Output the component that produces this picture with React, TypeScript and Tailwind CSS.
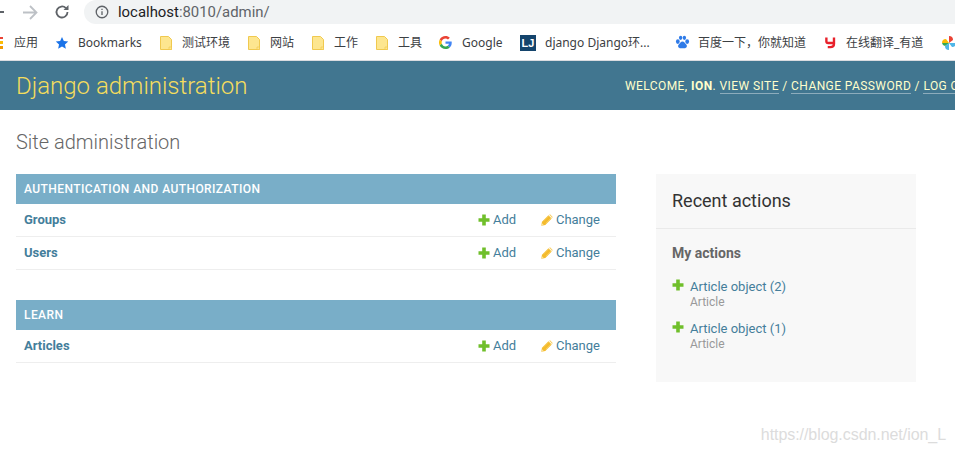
import React from "react";

const Plus = ({ className = "" }: { className?: string }) => (
  <svg viewBox="0 0 12 12" className={`w-[12px] h-[12px] shrink-0 ${className}`}>
    <path d="M4.2 0.5h3.600v3.700h3.700v3.600h-3.700v3.700h-3.600v-3.700h-3.700v-3.600h3.700z" fill="#70bf2b" />
  </svg>
);
const Pencil = () => (
  <svg viewBox="0 0 12 12" className="w-[12px] h-[12px] shrink-0">
    <path d="M0.3 11.700l0.700-4 6.400-6.400 3.300 3.300-6.400 6.400z" fill="#f4bb2c" />
    <path d="M8.200 0.800l0.900-0.500 2.600 2.600-0.500 1z" fill="#f8cf66" />
    <path d="M2.600 6.800l5.600-5.400M4.900 9.200l5.500-5.500" stroke="#fbdc8c" strokeWidth="0.5" fill="none" />
    <path d="M0.300 11.700l0.500-2.600 2.100 2.100z" fill="#fbe3a0" />
  </svg>
);
const Folder = () => (
  <svg viewBox="0 0 12 14" className="w-[12px] h-[14px] shrink-0">
    <path d="M0.5 0.5h8l3 3v10h-11z" fill="#fde68f" stroke="#f0c94f" />
    <path d="M9 11h2.500v2.500H9z" fill="#fde68f" stroke="#f0c94f" strokeWidth="0.7" />
  </svg>
);

const Bookmark = ({ icon, label, className = "" }: { icon: React.ReactNode; label: string; className?: string }) => (
  <div className={`flex items-center shrink-0 ${className}`}>
    {icon}
    <span className="whitespace-nowrap">{label}</span>
  </div>
);

const Row = ({ name }: { name: string }) => (
  <div className="h-[33px] flex items-center border-b border-[#eeeeee] pl-2 pr-[16px] text-[13px]">
    <a className="font-bold text-[#447e9b] flex-1">{name}</a>
    <Plus />
    <a className="text-[#447e9b] ml-[3px] w-[48px]">Add</a>
    <span className="w-[13px] flex"><Pencil /></span>
    <a className="text-[#447e9b] ml-[2px]">Change</a>
  </div>
);

const Caption = ({ children }: { children: string }) => (
  <div className="h-[30px] bg-[#79aec8] text-white text-[12px] font-medium tracking-[0.42px] flex items-center px-2">{children}</div>
);

const Action = ({ label }: { label: string }) => (
  <div className="flex h-[42px]">
    <Plus className="mt-[1px] mr-[6px]" />
    <div>
      <div className="text-[13px] leading-[17px] text-[#447e9b]">{label}</div>
      <div className="text-[12px] leading-[14px] text-[#999999]">Article</div>
    </div>
  </div>
);

export default function App() {
  return (
    <div className="w-[955px] h-[453px] overflow-hidden relative bg-white font-['Roboto',sans-serif]">
      <div className="h-6 flex items-center relative">
        <div className="w-[22px] h-[2px] -ml-[18px] bg-[#5f6368]" />
        <svg viewBox="0 0 16 16" className="w-[16px] h-[16px] ml-[18px]" fill="none" stroke="#bdc1c6" strokeWidth="1.8">
          <path d="M1 8.500h13M8 2l6.500 6.500L8 15" />
        </svg>
        <svg viewBox="0 0 16 16" className="w-[16px] h-[16px] ml-[16px]" fill="none" stroke="#5f6368" strokeWidth="1.8">
          <path d="M13.500 8a5.500 5.500 0 1 1-1.600-3.900" />
          <path d="M14.500 1v5h-5z" fill="#5f6368" stroke="none" />
        </svg>
        <div className="ml-[14px] flex-1 h-6 bg-[#f1f3f4] rounded-l-[12px] flex items-center pl-[11px] -mr-1">
          <svg viewBox="0 0 16 16" className="w-[14px] h-[14px]" fill="none" stroke="#5f6368" strokeWidth="1.5">
            <circle cx="8" cy="8" r="6.600" />
            <path d="M8 7v4.500M8 4.300v1.500" />
          </svg>
          <span className="ml-[9px] text-[14.9px]">
            <span className="text-[#202124]">localhost</span><span className="text-[#5f6368]">:8010/admin/</span>
          </span>
        </div>
      </div>
      <div className="h-[37px] pt-px border-b border-[#dadce0] flex items-center text-[12px] text-[#3c4043] font-['Noto_Sans','Noto_Sans_CJK_SC',sans-serif] relative">
        <div className="w-[3px] h-[12px] shrink-0 flex flex-col gap-[2px] mr-[11px]">
          <i className="h-[3px] bg-[#ea4335]" /><i className="h-[3px] bg-[#fbbc05]" /><i className="h-[3px] bg-[#f29900]" />
        </div>
        <Bookmark label="应用" icon={null} className="w-[41px]" />
        <Bookmark label="Bookmarks" className="w-[105px]" icon={
          <svg viewBox="0 0 16 16" className="w-[14px] h-[14px] mr-[9px]"><path d="M8 1l2.100 4.600 5 .6-3.700 3.400 1 5L8 11.900 3.600 14.600l1-5L.9 6.200l5-.6z" fill="#1a73e8" /></svg>
        } />
        <Bookmark label="测试环境" className="w-[88px]" icon={<span className="mr-[10px] flex"><Folder /></span>} />
        <Bookmark label="网站" className="w-[64px]" icon={<span className="mr-[10px] flex"><Folder /></span>} />
        <Bookmark label="工作" className="w-[64px]" icon={<span className="mr-[10px] flex"><Folder /></span>} />
        <Bookmark label="工具" className="w-[63px]" icon={<span className="mr-[10px] flex"><Folder /></span>} />
        <Bookmark label="Google" className="w-[81px]" icon={
          <svg viewBox="0 0 48 48" className="w-[13px] h-[13px] mr-[10px]">
            <path fill="#EA4335" d="M24 9.500c3.500 0 6.600 1.200 9.100 3.600l6.800-6.800C35.800 2.400 30.400 0 24 0 14.600 0 6.500 5.400 2.600 13.200l7.900 6.100C12.400 13.700 17.700 9.500 24 9.500z" />
            <path fill="#4285F4" d="M47 24.500c0-1.600-.1-3.100-.4-4.500H24v9h12.900c-.6 3-2.200 5.500-4.700 7.200l7.600 5.900C44.300 37.900 47 31.800 47 24.500z" />
            <path fill="#FBBC05" d="M10.500 28.700A14.500 14.500 0 0 1 10.500 19.300l-7.900-6.100a24 24 0 0 0 0 21.600z" />
            <path fill="#34A853" d="M24 48c6.500 0 11.900-2.100 15.800-5.800l-7.600-5.900c-2.100 1.400-4.900 2.300-8.200 2.300-6.300 0-11.600-4.200-13.500-9.900l-7.900 6.100C6.500 42.600 14.600 48 24 48z" />
          </svg>
        } />
        <Bookmark label="django Django环..." className="w-[155px]" icon={
          <span className="w-[16px] h-[16px] bg-[#14446c] text-white text-[11px] font-bold leading-[16px] text-center mr-[9px] font-['Liberation_Sans']">LJ</span>
        } />
        <Bookmark label="百度一下，你就知道" className="w-[150px]" icon={
          <svg viewBox="0 0 16 16" className="w-[15px] h-[15px] mr-[8px]" fill="#2f7be8">
            <ellipse cx="3" cy="7" rx="2" ry="2.500" /><ellipse cx="6" cy="3" rx="1.800" ry="2.300" /><ellipse cx="10" cy="3" rx="1.800" ry="2.300" /><ellipse cx="13" cy="7" rx="2" ry="2.500" />
            <path d="M8 7c2 0 2.500 2 4 3 1.500 1.500.5 4-2 4H6c-2.500 0-3.500-2.500-2-4 1.500-1 2-3 4-3z" />
          </svg>
        } />
        <Bookmark label="在线翻译_有道" className="w-[116px]" icon={
          <svg viewBox="0 0 12 14" className="w-[11px] h-[13px] mr-[10px]" fill="none" stroke="#e8212b" strokeWidth="2.600"><path d="M1.500 1.500v4.500q0 1.500 2 1.500h6M9.800 1.500v7q0 3.500-4 3.500H3" /></svg>
        } />
        <svg viewBox="0 0 16 16" className="w-[16px] h-[16px] shrink-0">
          <path d="M8 8V1a4 4 0 0 1 4 4z" fill="#ea4335" /><path d="M8 8h7a4 4 0 0 1-4 4z" fill="#4fb6e8" />
          <path d="M8 8v7a4 4 0 0 1-4-4z" fill="#4fb6e8" /><path d="M8 8H1a4 4 0 0 1 4-4z" fill="#fbbc05" /><path d="M8 8L1 8a4 4 0 0 0 3 3z" fill="#34a853" />
        </svg>
      </div>
      <header className="h-[49px] bg-[#417690] flex items-center justify-between whitespace-nowrap pl-4">
        <div className="text-[24px] font-light text-[#f5dd5d]">Django administration</div>
        <div className="text-[12px] font-normal text-[#ffffcc] tracking-[0.42px] w-[330px] shrink-0 overflow-hidden pt-[1px]">
          WELCOME, <strong className="font-bold">ION</strong>.{" "}
          <a className="border-b border-[#ffffff66]">VIEW SITE</a> /{" "}
          <a className="border-b border-[#ffffff66]">CHANGE PASSWORD</a> /{" "}
          <a className="border-b border-[#ffffff66]">LOG OUT</a>
        </div>
      </header>
      <main className="px-4 pt-5">
        <h1 className="text-[20px] font-light text-[#666666] leading-6 mb-5">Site administration</h1>
        <div className="flex items-start">
          <div className="w-[600px] mr-10">
            <Caption>AUTHENTICATION AND AUTHORIZATION</Caption>
            <Row name="Groups" />
            <Row name="Users" />
            <div className="h-[30px]" />
            <Caption>LEARN</Caption>
            <Row name="Articles" />
          </div>
          <aside className="w-[260px] h-[208px] bg-[#f8f8f8]">
            <div className="h-[55px] border-b border-[#eaeaea] pl-4 pt-[15px] text-[18px] leading-6 text-[#333333]">Recent actions</div>
            <div className="pl-4 pt-[15px]">
              <div className="text-[14px] font-bold text-[#666666] leading-[18px] mb-[16px]">My actions</div>
              <Action label="Article object (2)" />
              <Action label="Article object (1)" />
            </div>
          </aside>
        </div>
      </main>
      <div className="absolute right-[9px] bottom-[6px] text-[16px] tracking-[-0.06px] text-[#dcdcdc] font-['Liberation_Sans',sans-serif]">https://blog.csdn.net/ion_L</div>
    </div>
  );
}
